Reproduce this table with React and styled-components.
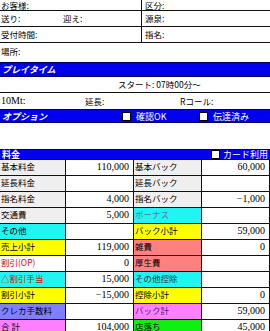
import React from 'react';
import styled, { createGlobalStyle } from 'styled-components';

const GlobalStyle = createGlobalStyle`
  html, body {
    margin: 0;
    padding: 0;
    background: #fff;
    overflow: hidden;
  }
`;

const jp = `"Noto Sans CJK JP", "Noto Sans", sans-serif`;
const serif = `"Liberation Serif", "Noto Sans CJK JP", serif`;

const Sheet = styled.div`
  width: 270px;
  height: 331px;
  overflow: hidden;
  font-family: ${jp};
  font-size: 8.5px;
  line-height: 1;
  color: #000;
`;

const Row = styled.div`
  display: flex;
  align-items: center;
  height: ${(p) => p.h}px;
  border-bottom: ${(p) => (p.line ? '1px solid #111' : 'none')};
  box-sizing: border-box;
  margin-top: ${(p) => p.mt || 0}px;
`;

const Field = styled.span`
  width: ${(p) => p.w}px;
  flex: ${(p) => (p.w ? 'none' : 1)};
  height: 100%;
  display: flex;
  align-items: center;
  padding-left: ${(p) => p.pl || 1}px;
  box-sizing: border-box;
  border-right: ${(p) => (p.divide ? '1px solid #111' : 'none')};
  font-family: ${(p) => (p.num ? serif : jp)};
  font-size: ${(p) => (p.num ? '10px' : 'inherit')};
  white-space: nowrap;
`;

const Bar = styled.div`
  display: flex;
  align-items: center;
  height: ${(p) => p.h}px;
  margin-top: ${(p) => p.mt || 0}px;
  background: #0000ee;
  border-top: 1px solid #000060;
  border-bottom: 1px solid #000060;
  box-sizing: border-box;
  color: #fff;
  font-weight: 700;
  font-size: 9px;
  white-space: nowrap;
`;

const BarTitle = styled.span`
  padding-left: 2px;
  font-style: ${(p) => (p.italic ? 'italic' : 'normal')};
  width: ${(p) => p.w || 'auto'};
  flex: ${(p) => (p.w ? 'none' : 1)};
`;

const Check = styled.span`
  display: inline-flex;
  align-items: center;
  gap: ${(p) => p.gap || 5}px;
  width: ${(p) => p.w || 'auto'};
  font-weight: 400;
  font-size: 9px;
  &::before {
    content: '';
    flex: none;
    width: 9px;
    height: 9px;
    box-sizing: border-box;
    background: #fff;
    border: 1.5px solid #000;
  }
`;

const Table = styled.div`
  display: grid;
  grid-template-columns: 66px 68px 68px 68px;
  grid-auto-rows: 16px;
`;

const Label = styled.div`
  background: ${(p) => p.bg || '#efefef'};
  color: ${(p) => p.fg || '#000'};
  border-right: 1px solid #111;
  border-bottom: 1px solid #111;
  box-sizing: border-box;
  padding: 0 0 2px 1px;
  display: flex;
  align-items: center;
  white-space: nowrap;
  overflow: hidden;
  font-size: 8.5px;
`;

const Value = styled.div`
  background: #fff;
  border-right: 1px solid #111;
  border-bottom: 1px solid #111;
  box-sizing: border-box;
  padding: 0 4px 2px 0;
  display: flex;
  align-items: center;
  justify-content: flex-end;
  font-family: ${serif};
  font-size: 10px;
`;

const GRAY = '#efefef';
const CYAN = '#22f4f4';
const YELLOW = '#ffff00';
const PERI = '#8080ff';
const PINK = '#ff80ff';
const SALMON = '#ff8080';
const GREEN = '#11ee11';
const RED = '#e00000';

const rows = [
  [['基本料金', GRAY], '110,000', ['基本バック', GRAY], '60,000'],
  [['延長料金', GRAY], '', ['延長バック', GRAY], ''],
  [['指名料金', GRAY], '4,000', ['指名バック', GRAY], '−1,000'],
  [['交通費', GRAY], '5,000', ['ボーナス', CYAN, '#5a7a9a'], ''],
  [['その他', CYAN], '', ['バック小計', YELLOW], '59,000'],
  [['売上小計', YELLOW], '119,000', ['雑費', SALMON], '0'],
  [['割引(OP)', '#fff', RED], '0', ['厚生費', SALMON], ''],
  [['△割引手当', CYAN, RED], '15,000', ['その他控除', CYAN, '#333'], ''],
  [['割引小計', YELLOW], '−15,000', ['控除小計', YELLOW], '0'],
  [['クレカ手数料', PERI], '', ['バック計', PINK, '#502060'], '59,000'],
  [['合 計', PINK], '104,000', ['店落ち', GREEN], '45,000'],
];

export default function App() {
  return (
    <Sheet>
      <GlobalStyle />
      <Row h={11} line>
        <Field w={142} divide>お客様:</Field>
        <Field pl={3}>区分:</Field>
      </Row>
      <Row h={16} line>
        <Field w={62}>送り:</Field>
        <Field w={80} divide>迎え:</Field>
        <Field pl={3}>源泉:</Field>
      </Row>
      <Row h={16} line>
        <Field w={142} divide>受付時間:</Field>
        <Field pl={3}>指名:</Field>
      </Row>
      <Row h={16}>
        <Field>場所:</Field>
      </Row>
      <Bar h={15} mt={3}>
        <BarTitle italic>プレイタイム</BarTitle>
      </Bar>
      <Row h={16} line>
        <Field pl={118}>スタート: 07時00分～</Field>
      </Row>
      <Row h={16}>
        <Field w={84} num>10Mt:</Field>
        <Field w={95}>延長:</Field>
        <Field>Rコール:</Field>
      </Row>
      <Bar h={14}>
        <BarTitle italic w="120px">オプション</BarTitle>
        <Check w="77px">確認OK</Check>
        <Check>伝達済み</Check>
      </Bar>
      <Bar h={11} mt={26}>
        <BarTitle w="209px">料金</BarTitle>
        <Check gap={3}>カード利用</Check>
      </Bar>
      <Table>
        {rows.map(([l, lv, r, rv], i) => (
          <React.Fragment key={i}>
            <Label bg={l[1]} fg={l[2]}>{l[0]}</Label>
            <Value>{lv}</Value>
            <Label bg={r[1]} fg={r[2]}>{r[0]}</Label>
            <Value>{rv}</Value>
          </React.Fragment>
        ))}
      </Table>
    </Sheet>
  );
}
